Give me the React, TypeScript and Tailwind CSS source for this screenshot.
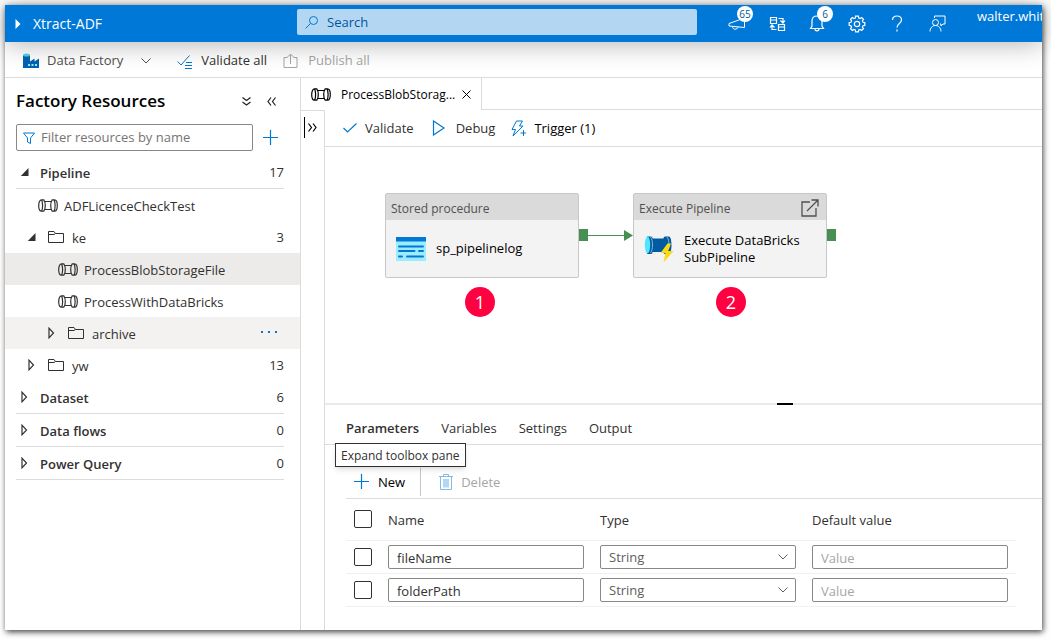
import { useState } from "react";
import type { ReactNode } from "react";
import clsx from "clsx";

interface TreeRow {
  label: string;
  kind: "section" | "folder" | "pipeline";
  indent: string;
  open?: boolean;
  count?: number;
  shade?: string;
  menu?: boolean;
}

const TREE: TreeRow[] = [
  { label: "Pipeline", kind: "section", indent: "", open: true, count: 17 },
  { label: "ADFLicenceCheckTest", kind: "pipeline", indent: "pl-[33px]" },
  { label: "ke", kind: "folder", indent: "pl-[22px]", open: true, count: 3 },
  { label: "ProcessBlobStorageFile", kind: "pipeline", indent: "pl-[53px]", shade: "bg-[#edebe9]" },
  { label: "ProcessWithDataBricks", kind: "pipeline", indent: "pl-[53px]" },
  { label: "archive", kind: "folder", indent: "pl-[42px]", shade: "bg-[#f3f2f1]", menu: true },
  { label: "yw", kind: "folder", indent: "pl-[22px]", count: 13 },
  { label: "Dataset", kind: "section", indent: "", count: 6 },
  { label: "Data flows", kind: "section", indent: "", count: 0 },
  { label: "Power Query", kind: "section", indent: "", count: 0 },
];

const PARAMS = ["fileName", "folderPath"];
const TABS = ["Parameters", "Variables", "Settings", "Output"];

function Icon({ w = 16, h = 16, className, children }: { w?: number; h?: number; className?: string; children: ReactNode }) {
  return (
    <svg width={w} height={h} viewBox={`0 0 ${w} ${h}`} fill="none" stroke="currentColor" className={clsx("shrink-0", className)} aria-hidden="true">
      {children}
    </svg>
  );
}

function PipelineIcon() {
  return (
    <Icon w={20} h={13}>
      <path d="M3.500.800C1.800.800.700 3.200.700 6.500s1.100 5.700 2.800 5.700h2.300c2-2.800 2-8.600 0-11.400zM3.500.800c1.500 2.800 1.500 8.600 0 11.400" strokeWidth="1.200" />
      <path d="M7 2.500h6M7 10.500h6" strokeWidth="1.200" />
      <path d="M16.500.800c1.700 0 2.800 2.400 2.800 5.700s-1.100 5.700-2.800 5.700h-2.300c-2-2.800-2-8.600 0-11.400zM16 .800c1.500 2.800 1.500 8.600 0 11.400" strokeWidth="1.200" />
    </Icon>
  );
}

function FolderIcon() {
  return (
    <Icon w={16} h={12}>
      <path d="M.5 11.500V.5h5.500l1.500 2h8v9zM.5 3.500h5.500l1.500-1" />
    </Icon>
  );
}

function Caret({ open }: { open?: boolean }) {
  return (
    <Icon w={10} h={12} className="text-[#323130]">
      {open ? <path d="M8.500 2v8H.8z" fill="currentColor" stroke="none" /> : <path d="M2 1.200v9.600l4.500-4.800z" strokeWidth="1.200" />}
    </Icon>
  );
}

function Chevron() {
  return (
    <Icon w={10} h={6}>
      <path d="M.5.5 5 5 9.500.5" />
    </Icon>
  );
}

function Plus() {
  return (
    <Icon>
      <path d="M7.500 0v15M0 7.500h15" stroke="#0078d4" strokeWidth="1.200" />
    </Icon>
  );
}

function HeaderButton({ label, badge, children }: { label: string; badge?: number; children: ReactNode }) {
  return (
    <button aria-label={label} className="relative flex w-10 items-center justify-center">
      {children}
      {badge && (
        <span className="absolute top-px left-5 flex size-4 items-center justify-center rounded-full bg-white text-[10px] leading-none text-[#005a9e]">
          {badge}
        </span>
      )}
    </button>
  );
}

function Header() {
  return (
    <header className="relative z-10 flex h-[37px] shrink-0 bg-[#0078d7] text-white shadow-[0_2px_26px_rgba(0,0,0,0.3)]">
      <div className="flex w-[292px] shrink-0 items-center gap-3 pl-2.5 text-sm">
        <Icon w={6} h={10}>
          <path d="M.5 0v10L5.500 5z" fill="currentColor" stroke="none" />
        </Icon>
        <span>Xtract-ADF</span>
      </div>
      <label className="my-1 flex h-[26px] min-w-0 flex-1 items-center gap-2 rounded-xs bg-[#b3d7f3] pl-2 text-[#0078d4]">
        <Icon w={14} h={14}>
          <circle cx="8.500" cy="5.500" r="4" />
          <path d="m5.500 8.500-5 5" />
        </Icon>
        <input aria-label="Search" placeholder="Search" className="w-full bg-transparent pt-0.5 text-[13px] outline-none placeholder:text-[#00559b]" />
      </label>
      <div className="flex shrink-0 pl-5">
        <HeaderButton label="Announcements" badge={65}>
          <Icon w={18} h={14}>
            <path d="M16.500 1 1 6.500v2.500l15.500 1.500zM4.500 9.500c0 3.500 5 3.500 5.500.500" />
          </Icon>
        </HeaderButton>
        <HeaderButton label="Switch factory">
          <Icon w={17} h={16}>
            <path d="M1.500 1.500h6v6h-6zM1.500 4h6M9.500 8.500h6v6h-6zM9.500 11h6M9.500 2.500h4.500v4M11.500 4.500l2.500 2.500 2-2.500M7.500 13.500H3v-4M1 11.500l2-2.500 2.500 2.500" strokeWidth="1.200" />
          </Icon>
        </HeaderButton>
        <HeaderButton label="Notifications" badge={6}>
          <Icon w={16} h={17}>
            <path d="M8 1C4.800 1 3 3.200 3 6v5l-1.500 2.500h13L13 11V6c0-2.800-1.800-5-5-5zM6 14c0 2.500 4 2.500 4 0" strokeWidth="1.200" />
          </Icon>
        </HeaderButton>
        <HeaderButton label="Settings">
          <svg width="18" height="18" viewBox="0 0 18 18" fill="none" stroke="currentColor" strokeWidth="1.200" aria-hidden="true">
            <path d="m7.600 1.200-.3 1.800-1.400.6-1.500-1.100-1.900 1.900 1.100 1.500-.6 1.400-1.800.3v2.800l1.800.3.6 1.400-1.100 1.500 1.900 1.900 1.500-1.100 1.400.6.3 1.800h2.800l.3-1.800 1.400-.6 1.500 1.100 1.900-1.900-1.100-1.500.6-1.400 1.800-.3V7.600L15 7.300l-.6-1.400 1.100-1.500-1.900-1.900-1.500 1.100-1.400-.6-.3-1.800z" />
            <circle cx="9" cy="9" r="2.700" />
          </svg>
        </HeaderButton>
        <HeaderButton label="Help">
          <Icon w={12} h={17}>
            <path d="M1.500 5c0-2.500 1.800-4 4.500-4s4.500 1.500 4.500 4c0 3.500-4.500 3.500-4.500 7.500M6 14.500v2" strokeWidth="1.200" />
          </Icon>
        </HeaderButton>
        <HeaderButton label="Feedback">
          <Icon w={17} h={17}>
            <circle cx="6.500" cy="7.500" r="3" />
            <path d="M1 16.500c0-3.500 2.500-6 5.500-6s5.500 2.500 5.500 6M5.500 3V1h10.500v8h-2l-2 2V9h-1" />
          </Icon>
        </HeaderButton>
      </div>
      <span className="w-[85px] shrink-0 overflow-hidden pt-px pl-5 text-[13px] leading-5 whitespace-nowrap">walter.whit</span>
    </header>
  );
}

function Toolbar() {
  return (
    <div className="flex h-9 shrink-0 items-center border-b border-[#dcdcdc] pt-0.5 pl-[18px] text-[13px]">
      <button className="flex items-center gap-2 text-[#505050]">
        <Icon>
          <path d="M0 2v13h16V5.500l-4.500 3v-3L7 8.500V2z" fill="#0063b1" stroke="none" />
          <ellipse cx="3.500" cy="2" rx="3.500" ry="1.600" fill="#50d0e8" stroke="none" />
          <path d="M5 11h2v2H5zM8.500 11h2v2h-2zM12 11h2v2h-2z" fill="#9fe4f7" stroke="none" />
        </Icon>
        Data Factory
        <span className="pl-2.5"><Chevron /></span>
      </button>
      <button className="ml-[26px] flex items-center gap-2 text-[#323130]">
        <Icon className="text-[#0078d4]">
          <path d="M.5 8.500 4 12l8.500-9.500" />
          <path d="M9 9.500h6M8 12.500h7M8 15.500h7" />
        </Icon>
        Validate all
      </button>
      <button disabled className="ml-4 flex items-center gap-2.5 text-[#a6a6a6]">
        <Icon w={15} h={16}>
          <path d="M4.500 4.500H1v10h13v-10h-3.500M7.500 11V1.500M4.500 4l3-3 3 3" />
        </Icon>
        Publish all
      </button>
    </div>
  );
}

function Row({ row }: { row: TreeRow }) {
  const section = row.kind === "section";
  return (
    <li className={clsx(row.shade, section && "pr-4 pl-[11px]")}>
      <div className={clsx("flex items-center", section ? "h-[33px] border-b border-[#dcdcdc] pl-1" : "h-8 pr-4", row.indent)}>
        <button className="flex min-w-0 flex-1 items-center text-left">
          {row.kind !== "pipeline" && <Caret open={row.open} />}
          {row.kind === "folder" && <span className="pl-[11px]"><FolderIcon /></span>}
          {row.kind === "pipeline" && <PipelineIcon />}
          <span className={clsx("truncate pt-[3px]", section ? "pl-2.5 font-semibold" : row.kind === "folder" ? "pl-2" : "pl-1.5")}>{row.label}</span>
        </button>
        {row.count !== undefined && <span className="pt-0.5">{row.count}</span>}
        {row.menu && (
          <button aria-label="More" className="pr-1.5 text-[#0078d4]">
            <Icon w={18} h={8}>
              <path d="M1 2h2v2H1zM8 2h2v2H8zM15 2h2v2h-2z" fill="currentColor" stroke="none" />
            </Icon>
          </button>
        )}
      </div>
    </li>
  );
}

function Sidebar() {
  return (
    <aside className="w-[296px] shrink-0 border-r border-[#dcdcdc] text-[13px] text-[#323130]">
      <div className="flex h-[46px] items-center pr-6 pl-[11px] text-[#201f1e]">
        <h1 className="flex-1 text-[17px] font-semibold text-black">Factory Resources</h1>
        <button aria-label="Collapse all" className="pr-4">
          <Icon w={9} h={9}>
            <path d="M.5.5l4 3 4-3M.5 5l4 3 4-3" strokeWidth="1.200" />
          </Icon>
        </button>
        <button aria-label="Hide pane">
          <Icon w={9} h={9}>
            <path d="M4 .5l-3 4 3 4M8.500.5l-3 4 3 4" strokeWidth="1.200" />
          </Icon>
        </button>
      </div>
      <div className="mb-[5px] flex items-center gap-2.5 pr-[21px] pl-[11px]">
        <label className="flex h-[27px] flex-1 items-center gap-1.5 rounded-xs border border-[#8a8886] pl-1.5">
          <Icon w={12} h={12} className="text-[#0078d4]">
            <path d="M.5 1h11L7.500 6v5.500l-3-1.500V6z" />
          </Icon>
          <input aria-label="Filter resources by name" placeholder="Filter resources by name" className="w-full min-w-0 outline-none placeholder:text-[#767472]" />
        </label>
        <button aria-label="Add resource"><Plus /></button>
      </div>
      <ul>
        {TREE.map((row) => <Row key={row.label} row={row} />)}
      </ul>
    </aside>
  );
}

function Activity({ type, name, className, icon, link }: { type: string; name: string; className: string; icon: ReactNode; link?: boolean }) {
  return (
    <div className={clsx("absolute top-[46px] h-[85px] w-[194px] rounded-xs border border-[#c8c8c8] bg-[#f3f3f3]", className)}>
      <div className="flex h-[26px] items-center justify-between bg-[#dadada] pt-0.5 pr-[7px] pl-[5px] text-xs text-[#505050]">
        <span className="pt-0.5">{type}</span>
        {link && (
          <Icon w={18} h={18}>
            <path d="M9 3H1v14h14V9M6 12 17 1M10.500 1H17v6.500" strokeWidth="1.300" />
          </Icon>
        )}
      </div>
      <div className="flex h-[57px] items-center gap-2.5 pl-2.5 text-[13px] leading-[17px] text-black">
        {icon}
        <span className="w-[125px]">{name}</span>
      </div>
      <span className="absolute top-[35px] left-[193px] h-3 w-[9px] bg-[#498e53]" />
    </div>
  );
}

function Canvas() {
  return (
    <div className="relative min-h-[256px] flex-1 overflow-hidden">
      <Activity
        type="Stored procedure"
        name="sp_pipelinelog"
        className="left-[60px]"
        icon={
          <Icon w={30} h={24}>
            <path d="M0 0h30v24H0z" fill="#9cebff" stroke="none" />
            <path d="M0 0h30v4.500H0z" fill="#0078d4" stroke="none" />
            <path d="M3 9.500h24M3 14h15.500M23 14h4M3 19.500h3M11 19.500h16" stroke="#0078d4" strokeWidth="2" strokeLinecap="round" />
          </Icon>
        }
      />
      <Icon w={45} h={11} className="absolute top-[83px] left-[263px] text-[#498e53]">
        <path d="M0 5.500h36" />
        <path d="M36 0v11l9-5.500z" fill="currentColor" stroke="none" />
      </Icon>
      <Activity
        type="Execute Pipeline"
        name="Execute DataBricks SubPipeline"
        className="left-[308px]"
        link
        icon={
          <Icon w={30} h={30}>
            <path d="M3 2.500h4c1 0 1.500 1 1.500 2h11c0-1 .5-2 1.500-2h4c1.500 0 2.500 4 2.500 8.500s-1 9-2.500 9h-4c-1 0-1.500-1-1.500-2h-11c0 1-.5 2-1.500 2H3z" fill="#005ba1" stroke="none" />
            <ellipse cx="3.500" cy="11" rx="2.700" ry="8.500" fill="#50e6ff" stroke="none" />
            <path d="M6.500 3c1.500 2 2 5 2 8s-.5 6-2 8M23 3c1.500 2 2 5 2 8s-.3 3-.8 5" stroke="#83b9e0" />
            <path d="M23.500 9.500 16.500 19h5l-2 9.500L29.500 17H24l3-7.500z" fill="#ffd90f" stroke="none" />
          </Icon>
        }
      />
      <span className="absolute top-[140px] left-[140px] flex size-[30px] items-center justify-center rounded-full bg-[#ff0040] text-lg text-white">1</span>
      <span className="absolute top-[140px] left-[391px] flex size-[30px] items-center justify-center rounded-full bg-[#ff0040] text-lg text-white">2</span>
    </div>
  );
}

const checkbox = "block size-[18px] appearance-none rounded-xs border border-[#323130] bg-white checked:bg-[#0078d4]";
const field = "h-6 w-full rounded-xs border border-[#8a8886] bg-white px-2 pt-0.5 text-[13px] outline-none";

function Properties() {
  const [tab, setTab] = useState(TABS[0]);

  return (
    <section className="relative h-[227px] shrink-0 border-t-2 border-[#eaeaea] text-[13px] text-[#323130]">
      <button aria-label="Resize panel" className="absolute -top-[2px] left-[452px] h-0.5 w-4 bg-black" />
      <div className="flex h-10 items-center gap-[22px] border-b border-[#dcdcdc] pt-2 pl-[21px]">
        {TABS.map((t) => (
          <button key={t} onClick={() => setTab(t)} className={clsx(t === tab && "font-semibold")}>{t}</button>
        ))}
      </div>
      <div className="pt-[21px] pl-[21px]">
        <div className="flex h-[33px] items-center border-b border-[#dcdcdc]">
          <button className="flex h-7 items-center gap-2 border-r border-[#c8c6c4] pr-[15px] pl-2 text-black">
            <Plus />
            <span className="pt-0.5">New</span>
          </button>
          <button disabled className="flex items-center gap-2 pl-[18px] text-[#a6a6a6]">
            <Icon w={14} h={16} className="text-[#83bbe8]">
              <path d="M0 2.500h14M4.500 2V.5h5V2M1.500 3v12.500h11V3" />
              <path d="M4 5h6v8.500H4z" fill="#b3d7f3" stroke="none" />
            </Icon>
            <span className="pt-0.5">Delete</span>
          </button>
        </div>
        <div className="pr-[26px]">
          <table className="w-full table-fixed border-collapse text-left">
            <thead>
              <tr className="h-[41px] border-b border-[#f0f0f0]">
                <th className="w-[34px] px-2"><input type="checkbox" aria-label="Select all" className={checkbox} /></th>
                <th className="px-2 pt-0.5 font-medium">Name</th>
                <th className="px-2 pt-0.5 font-medium">Type</th>
                <th className="px-2 pt-0.5 font-medium">Default value</th>
              </tr>
            </thead>
            <tbody>
              {PARAMS.map((p) => (
                <tr key={p} className="h-[33px] border-b border-[#f0f0f0]">
                  <td className="px-2"><input type="checkbox" aria-label={`Select ${p}`} className={checkbox} /></td>
                  <td className="px-2"><input aria-label="Name" defaultValue={p} className={clsx(field, "block")} /></td>
                  <td className="px-2">
                    <div className="relative text-[#605e5c]">
                      <select aria-label={`Type of ${p}`} className={clsx(field, "block appearance-none")}>
                        <option>String</option>
                      </select>
                      <span className="pointer-events-none absolute top-[9px] right-2"><Chevron /></span>
                    </div>
                  </td>
                  <td className="px-2"><input aria-label={`Default value of ${p}`} placeholder="Value" className={clsx(field, "block placeholder:text-[#a6a6a6]")} /></td>
                </tr>
              ))}
            </tbody>
          </table>
        </div>
      </div>
      <div role="tooltip" className="absolute top-[38px] left-[10px] border border-[#323130] bg-white px-[5px] pt-px text-xs leading-[21px] shadow-md">
        Expand toolbox pane
      </div>
    </section>
  );
}

export default function App() {
  return (
    <div className="flex min-h-screen bg-white pt-[5px] pr-[9px] pb-[9px] pl-[5px] font-['Open_Sans','Noto_Sans',sans-serif]">
      <div className="flex min-w-0 flex-1 flex-col bg-white shadow-[1px_2px_6px_rgba(0,0,0,0.75)]">
        <Header />
        <Toolbar />
        <div className="flex flex-1">
          <Sidebar />
          <main className="flex min-w-0 flex-1 flex-col">
            <div className="flex h-8">
              <div className="flex w-[181px] items-center border-r border-[#dcdcdc] pl-2.5 text-xs text-black">
                <PipelineIcon />
                <span className="ml-2.5 pt-0.5">ProcessBlobStorag...</span>
                <button aria-label="Close tab" className="mr-2.5 ml-auto">
                  <Icon w={9} h={9}>
                    <path d="m.5.5 8 8m0-8-8 8" />
                  </Icon>
                </button>
              </div>
              <div className="flex-1 border-b border-[#dcdcdc]" />
            </div>
            <div className="flex flex-1">
              <div className="w-6 shrink-0 border-t border-r border-[#dcdcdc]">
                <button aria-label="Expand toolbox pane" className="mt-1.5 ml-[3px] flex h-[21px] items-center border-l border-black pl-[3px]">
                  <Icon w={9} h={9}>
                    <path d="m.5.5 3 4-3 4m4.500-8 3 4-3 4" strokeWidth="1.200" />
                  </Icon>
                </button>
              </div>
              <div className="flex min-w-0 flex-1 flex-col">
                <div className="flex h-[37px] items-center border-b border-[#dcdcdc] pl-[18px] text-[13px] text-[#323130]">
                  <button className="flex items-center gap-2">
                    <Icon w={14} h={14} className="text-[#0078d4]">
                      <path d="m.5 7 4 4 9-8.500" strokeWidth="1.200" />
                    </Icon>
                    <span className="pt-0.5">Validate</span>
                  </button>
                  <button className="ml-[18px] flex items-center gap-2.5">
                    <Icon w={14} h={16} className="text-[#0078d4]">
                      <path d="M1.500 1v14L12 8z" strokeWidth="1.200" />
                    </Icon>
                    <span className="pt-0.5">Debug</span>
                  </button>
                  <button className="ml-4 flex items-center gap-2 text-black">
                    <Icon w={15} h={17} className="text-[#0078d4]">
                      <path d="M5.500 1h6L8.500 6h3.500L2 16l2.500-6.500H1zM12.500 10v6M9.500 13h6" />
                    </Icon>
                    <span className="pt-0.5">Trigger (1)</span>
                  </button>
                </div>
                <Canvas />
                <Properties />
              </div>
            </div>
          </main>
        </div>
      </div>
    </div>
  );
}
